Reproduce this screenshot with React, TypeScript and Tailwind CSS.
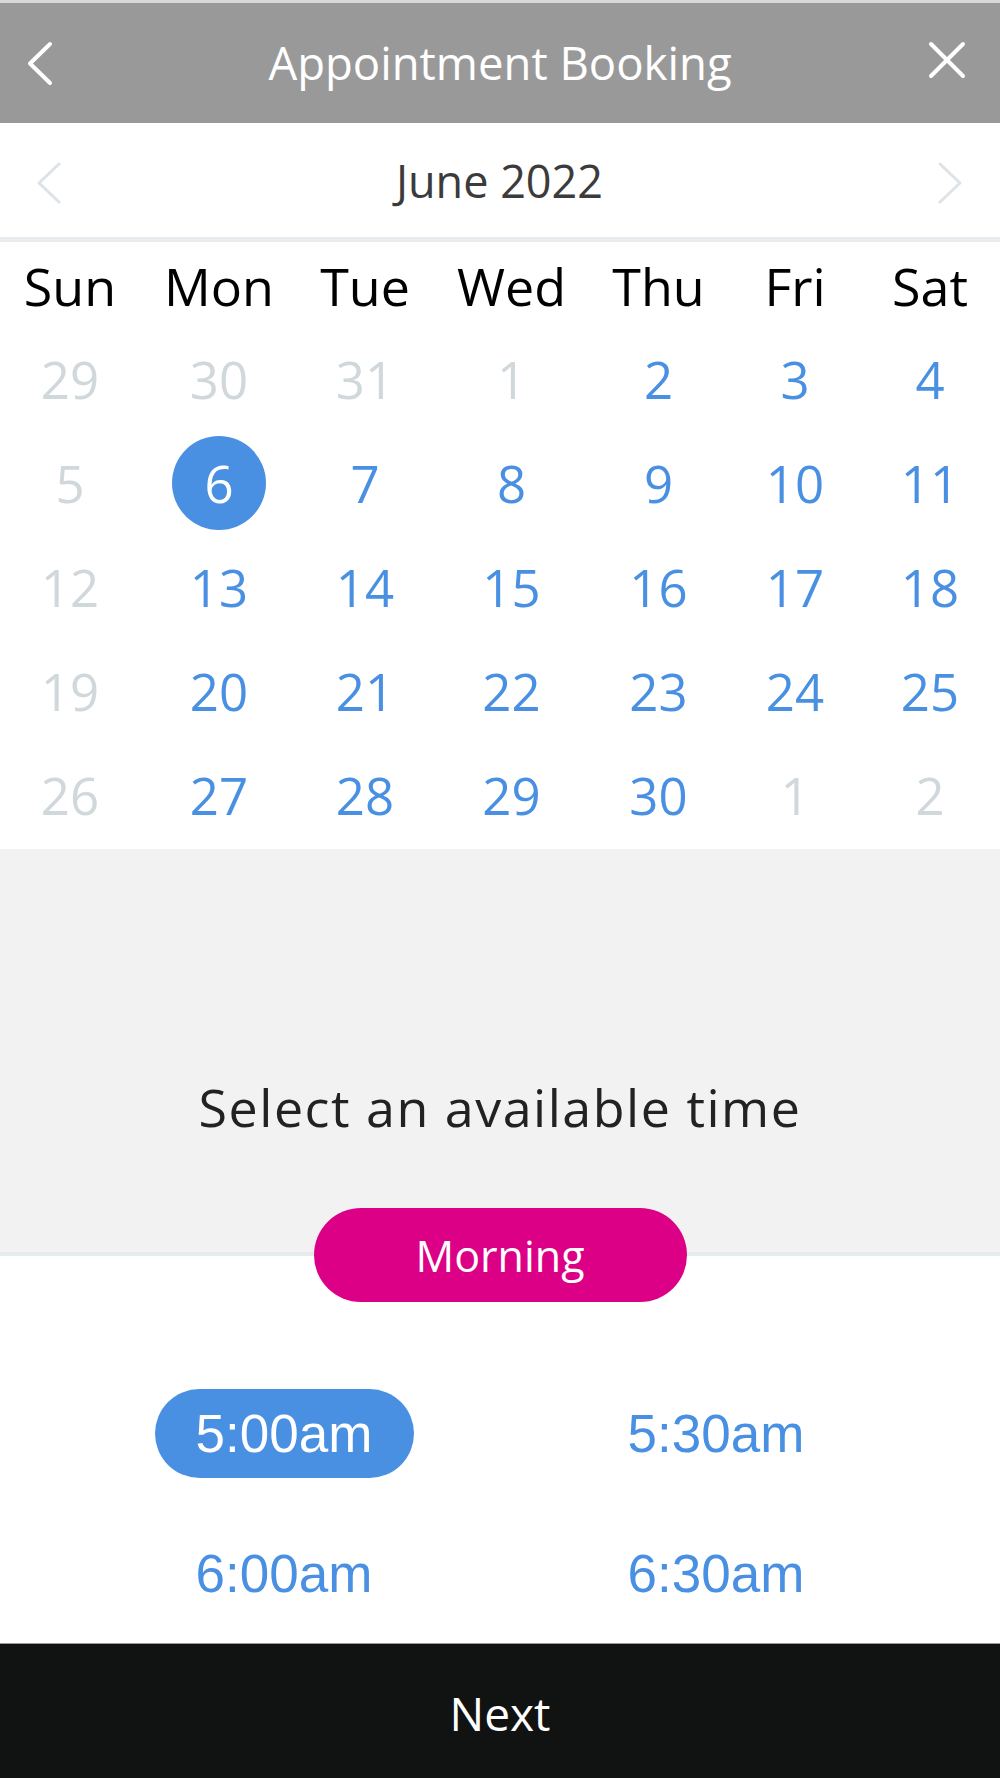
import React from "react";

const days = ["Sun", "Mon", "Tue", "Wed", "Thu", "Fri", "Sat"];

// [label, muted]
const weeks: [string, boolean][][] = [
  [["29", true], ["30", true], ["31", true], ["1", true], ["2", false], ["3", false], ["4", false]],
  [["5", true], ["6", false], ["7", false], ["8", false], ["9", false], ["10", false], ["11", false]],
  [["12", true], ["13", false], ["14", false], ["15", false], ["16", false], ["17", false], ["18", false]],
  [["19", true], ["20", false], ["21", false], ["22", false], ["23", false], ["24", false], ["25", false]],
  [["26", true], ["27", false], ["28", false], ["29", false], ["30", false], ["1", true], ["2", true]],
];

const times = ["5:00am", "5:30am", "6:00am", "6:30am"];

export default function App() {
  return (
    <div className="w-[1000px] h-[1778px] flex flex-col bg-white font-['Open_Sans','Noto_Sans',sans-serif]">
      <div className="h-[3px] bg-[#d8d8d8]" />

      {/* header */}
      <div className="h-[120px] bg-[#999999] flex items-center text-white">
        <div className="w-[120px] pl-[26px]">
          <svg width="28" height="45" viewBox="0 0 28 45" fill="none">
            <polyline points="24,3 4,22.5 24,42" stroke="white" strokeWidth="4" strokeLinecap="round" strokeLinejoin="round" />
          </svg>
        </div>
        <div className="flex-1 text-center text-[45.5px] leading-none">Appointment Booking</div>
        <div className="w-[120px] flex justify-end pr-[34px] mb-[6px]">
          <svg width="38" height="38" viewBox="0 0 38 38" fill="none">
            <path d="M3 3 L35 35 M35 3 L3 35" stroke="white" strokeWidth="4" strokeLinecap="round" />
          </svg>
        </div>
      </div>

      {/* month switcher */}
      <div className="h-[114px] flex items-center justify-between px-[36px]">
        <svg width="26" height="42" viewBox="0 0 26 42" fill="none" className="mt-[6px]">
          <polyline points="23,2 3,21 23,40" stroke="#dde3e6" strokeWidth="3" strokeLinecap="round" strokeLinejoin="round" />
        </svg>
        <div className="text-[45px] leading-none text-[#3b3b3b]">June 2022</div>
        <svg width="26" height="42" viewBox="0 0 26 42" fill="none" className="mt-[6px] mr-[1px]">
          <polyline points="3,2 23,21 3,40" stroke="#dde3e6" strokeWidth="3" strokeLinecap="round" strokeLinejoin="round" />
        </svg>
      </div>
      <div className="h-[5px] bg-[#e8ecef]" />

      {/* calendar */}
      <div className="grid grid-cols-[140px_158px_134px_159px_135px_138px_132px]">
        {days.map((d) => (
          <div key={d} className="h-[87px] flex items-center justify-center text-[52px] leading-none text-black">
            {d}
          </div>
        ))}
        {weeks.flat().map(([n, muted], i) => (
          <div key={i} className="h-[104px] flex items-center justify-center pb-[4px]">
            {n === "6" && !muted ? (
              <div className="w-[94px] h-[94px] rounded-full bg-[#4a90e2] text-white flex items-center justify-center text-[51px] leading-none">
                {n}
              </div>
            ) : (
              <span className={muted ? "text-[51px] leading-none text-[#d0d8db]" : "text-[51px] leading-none text-[#4a90e2]"}>
                {n}
              </span>
            )}
          </div>
        ))}
      </div>

      {/* time picker */}
      <div className="h-[407px] bg-[#f2f2f2] border-b-4 border-[#e6ecee] flex flex-col items-center pt-[232px]">
        <div className="text-[52px] leading-none tracking-[1.5px] text-[#222222]">Select an available time</div>
      </div>

      <div className="flex-1 flex flex-col items-center">
        <div className="relative -mt-[48px] w-[373px] h-[94px] rounded-full bg-[#dc0087] text-white flex items-center justify-center text-[43px] leading-none">
          Morning
        </div>
        <div className="mt-[87px] w-full px-[68px] grid grid-cols-2 gap-y-[51px] font-['Liberation_Sans',Arial,sans-serif]">
          {times.map((t, i) => (
            <div key={t} className="h-[89px] flex items-center justify-center">
              <div
                className={
                  i === 0
                    ? "w-[259px] h-[89px] rounded-full bg-[#4a90e2] text-white flex items-center justify-center text-[53px] leading-none"
                    : "text-[53px] leading-none text-[#4a90e2]"
                }
              >
                {t}
              </div>
            </div>
          ))}
        </div>
      </div>

      <div className="h-[135px] border-t border-[#9b9b9b] bg-[#111312] flex items-center justify-center pt-[4px]">
        <span className="text-[46px] leading-none text-white">Next</span>
      </div>
    </div>
  );
}
